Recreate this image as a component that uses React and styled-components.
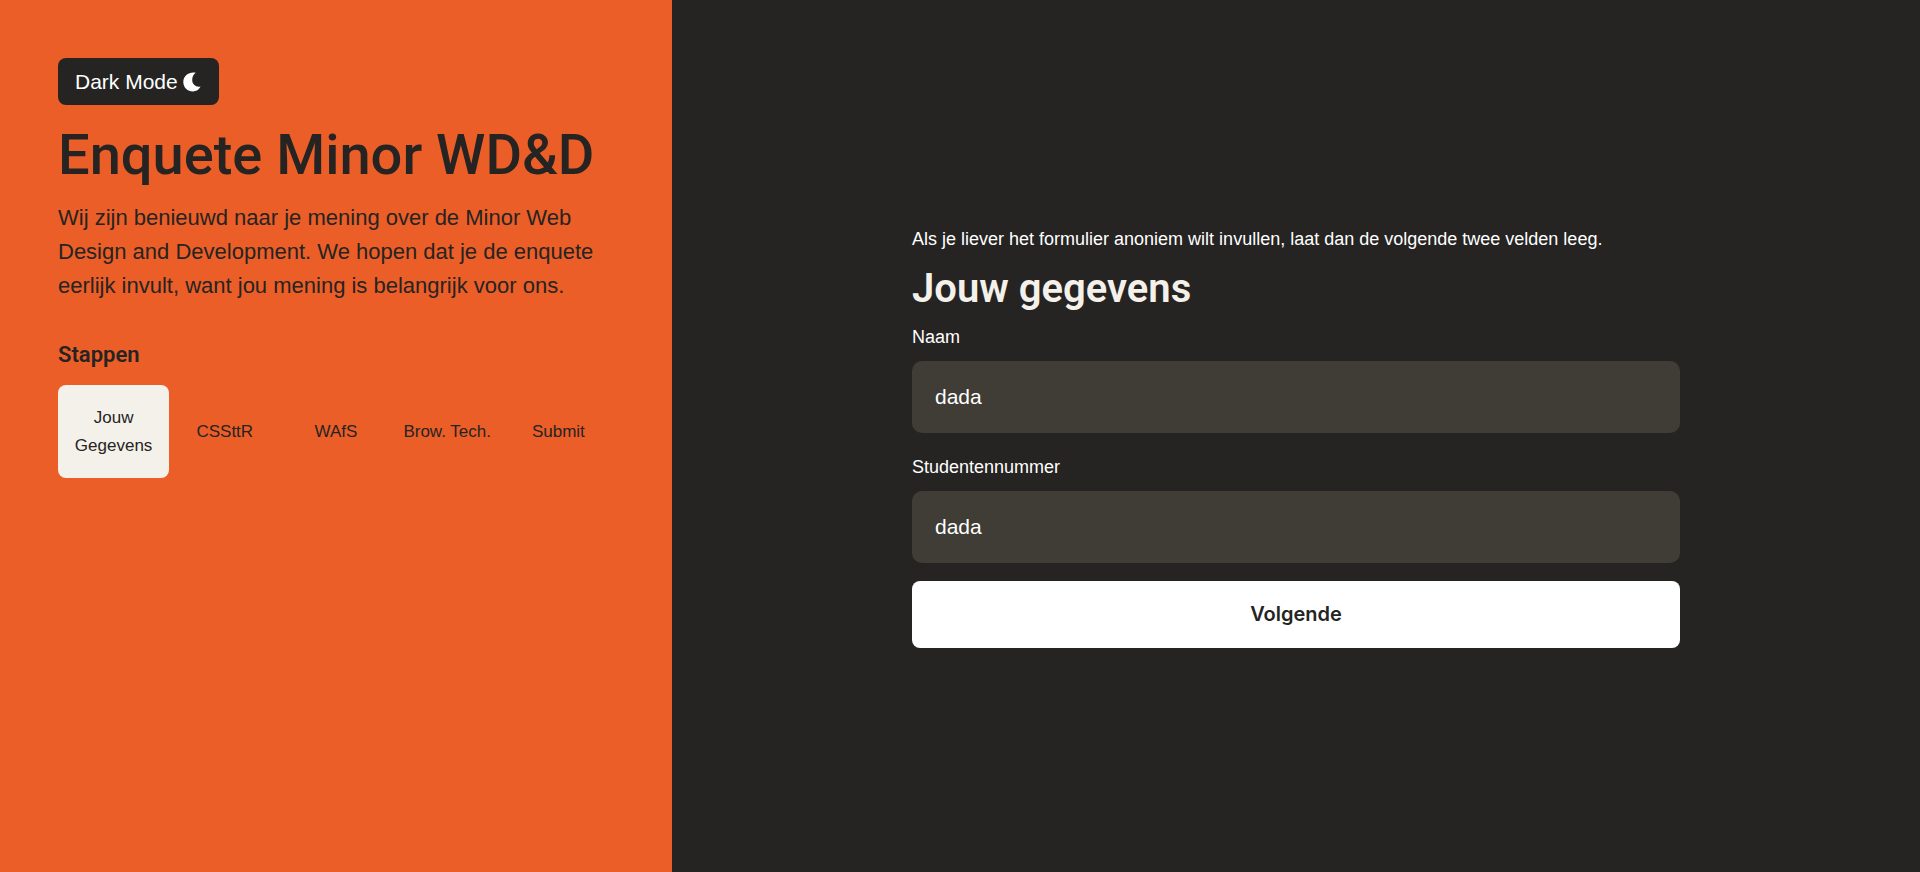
import React, { useState } from "react";
import styled, { createGlobalStyle, ThemeProvider } from "styled-components";

const theme = {
  orange: "#ec5e28",
  ink: "#252422",
  field: "#403d37",
  cream: "#f4f1ea",
  white: "#ffffff",
  heading: 'Roboto, "Liberation Sans", sans-serif',
  action: 'Inter, "Liberation Sans", sans-serif',
  body: '"Liberation Sans", Arial, sans-serif',
  radius: "8px",
};

const GlobalStyle = createGlobalStyle`
  *, *::before, *::after { box-sizing: border-box; }
  body {
    margin: 0;
    background: ${theme.ink};
    color: ${theme.ink};
    font-family: ${theme.body};
  }
`;

const Page = styled.div`
  display: grid;
  grid-template-columns: 35% 1fr;
  min-height: 100vh;
`;

const Sidebar = styled.aside`
  display: flex;
  flex-direction: column;
  align-items: flex-start;
  padding: 58px;
  background: ${({ theme }) => theme.orange};
`;

const ModeButton = styled.button`
  display: flex;
  align-items: center;
  gap: 5px;
  height: 47px;
  padding: 0 18px 0 17px;
  border: 0;
  border-radius: ${({ theme }) => theme.radius};
  background: ${({ theme }) => theme.ink};
  color: ${({ theme }) => theme.white};
  font: 21px ${({ theme }) => theme.body};
  cursor: pointer;
`;

const Title = styled.h1`
  margin: 16px 0 12px;
  font: 500 56px/68px ${({ theme }) => theme.heading};
  white-space: nowrap;
`;

const Intro = styled.p`
  margin: 0 0 38px;
  font-size: 22px;
  line-height: 34px;
`;

const StepsTitle = styled.h2`
  margin: 0 0 16px;
  font: 600 22px/28px ${({ theme }) => theme.heading};
`;

const Steps = styled.nav`
  display: grid;
  grid-template-columns: repeat(5, 1fr);
  align-self: stretch;
`;

const Step = styled.a`
  display: flex;
  align-items: center;
  justify-content: center;
  min-height: 93px;
  border-radius: ${({ theme }) => theme.radius};
  background: ${({ $active, theme }) => ($active ? theme.cream : "transparent")};
  color: ${({ theme }) => theme.ink};
  font-size: 17px;
  line-height: 28px;
  text-align: center;
  text-decoration: none;
`;

const Main = styled.main`
  display: flex;
  align-items: center;
  justify-content: center;
`;

const Form = styled.form`
  display: flex;
  flex-direction: column;
  width: 40vw;
  color: ${({ theme }) => theme.white};
`;

const Note = styled.p`
  margin: 0 0 10px;
  font-size: 18px;
  line-height: 28px;
`;

const FormTitle = styled.h2`
  margin: 0 0 8px;
  color: ${({ theme }) => theme.cream};
  font: 600 40px/52px ${({ theme }) => theme.heading};
`;

const Field = styled.div`
  display: flex;
  flex-direction: column;
  gap: 10px;
  margin-bottom: 20px;

  &:last-of-type { margin-bottom: 18px; }
`;

const Label = styled.label`
  font-size: 18px;
  line-height: 28px;
`;

const Input = styled.input`
  width: 100%;
  height: 72px;
  padding: 0 23px;
  border: 0;
  border-radius: 10px;
  background: ${({ theme }) => theme.field};
  color: ${({ theme }) => theme.white};
  font: 21px ${({ theme }) => theme.body};
`;

const NextButton = styled.button`
  height: 67px;
  border: 0;
  border-radius: ${({ theme }) => theme.radius};
  background: ${({ theme }) => theme.white};
  color: ${({ theme }) => theme.ink};
  font: 600 20px ${({ theme }) => theme.action};
  cursor: pointer;
`;

const MoonIcon = () => (
  <svg width="18" height="20" viewBox="0 0 18 20" fill="currentColor" aria-hidden="true">
    <path d="M12.8 0.7C6.8 -0.8 0.3 3.2 0.3 9.9C0.3 15.3 4.6 19.4 9.9 19.4C13.3 19.4 16.1 17.7 17.6 14.5C13.2 15.5 9.2 12.8 9.2 8.1C9.2 4.8 10.4 2.2 12.8 0.7Z" />
  </svg>
);

const steps = ["Jouw Gegevens", "CSSttR", "WAfS", "Brow. Tech.", "Submit"];

const fields = [
  { id: "naam", label: "Naam" },
  { id: "studentennummer", label: "Studentennummer" },
];

export default function App() {
  const [values, setValues] = useState({ naam: "dada", studentennummer: "dada" });

  return (
    <ThemeProvider theme={theme}>
      <GlobalStyle />
      <Page>
        <Sidebar>
          <ModeButton type="button">
            Dark Mode
            <MoonIcon />
          </ModeButton>
          <Title>Enquete Minor WD&amp;D</Title>
          <Intro>
            Wij zijn benieuwd naar je mening over de Minor Web Design and Development. We hopen
            dat je de enquete eerlijk invult, want jou mening is belangrijk voor ons.
          </Intro>
          <StepsTitle>Stappen</StepsTitle>
          <Steps aria-label="Stappen">
            {steps.map((step, i) => (
              <Step key={step} href={`#stap-${i + 1}`} $active={i === 0}>
                {step}
              </Step>
            ))}
          </Steps>
        </Sidebar>
        <Main>
          <Form onSubmit={(e) => e.preventDefault()}>
            <Note>
              Als je liever het formulier anoniem wilt invullen, laat dan de volgende twee velden
              leeg.
            </Note>
            <FormTitle>Jouw gegevens</FormTitle>
            {fields.map(({ id, label }) => (
              <Field key={id}>
                <Label htmlFor={id}>{label}</Label>
                <Input
                  id={id}
                  type="text"
                  value={values[id]}
                  onChange={(e) => setValues({ ...values, [id]: e.target.value })}
                />
              </Field>
            ))}
            <NextButton type="submit">Volgende</NextButton>
          </Form>
        </Main>
      </Page>
    </ThemeProvider>
  );
}
